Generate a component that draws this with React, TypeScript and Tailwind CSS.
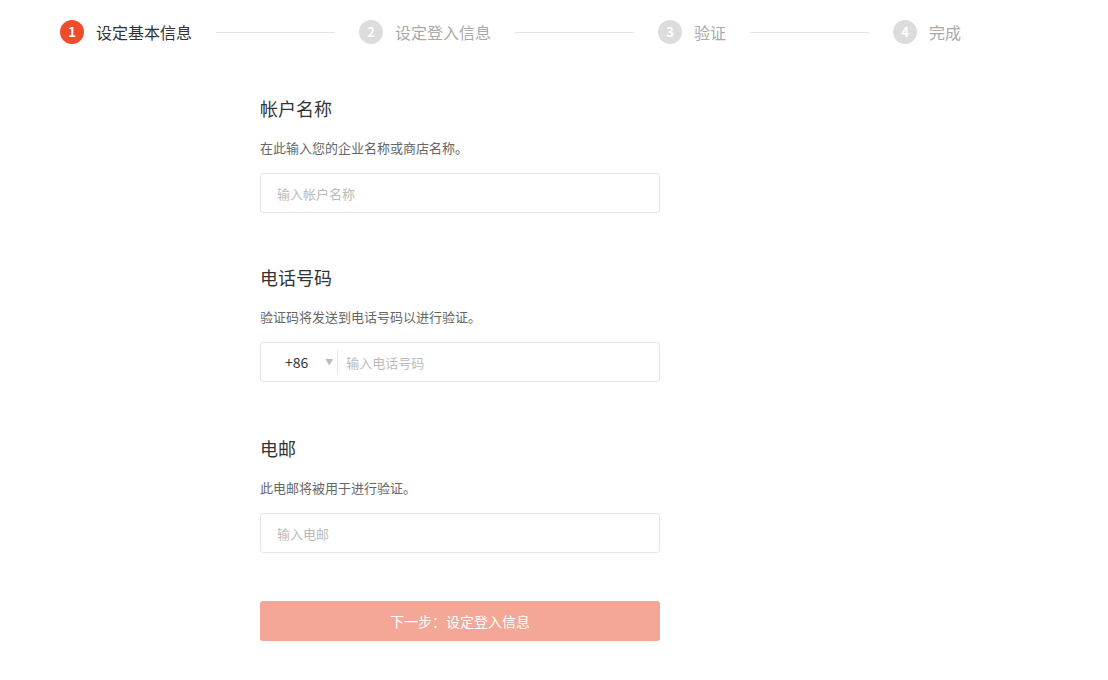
import { ChevronDown } from "lucide-react"

const font = { fontFamily: '"Noto Sans CJK SC", "Liberation Sans", sans-serif' }

const steps = ["设定基本信息", "设定登入信息", "验证", "完成"]

function Steps() {
  return (
    <div className="flex items-center pl-[60px] pt-5">
      {steps.map((s, i) => (
        <div key={s} className="flex items-center">
          <div
            className={
              i === 0
                ? "flex h-6 w-6 items-center justify-center rounded-full bg-[#ee4d2d] text-[13px] font-bold text-white"
                : "flex h-6 w-6 items-center justify-center rounded-full bg-[#dcdcdc] text-[13px] font-bold text-white"
            }
          >
            {i + 1}
          </div>
          <span className={i === 0 ? "ml-3 text-[16px] leading-6 text-[#333]" : "ml-3 text-[16px] leading-6 text-[#aaa]"}>
            {s}
          </span>
          {i < steps.length - 1 && <div className="mx-6 h-px w-[119px] bg-[#e3e3e3]" />}
        </div>
      ))}
    </div>
  )
}

function Section({ title, desc, children }: { title: string; desc: string; children: React.ReactNode }) {
  return (
    <section>
      <h2 className="text-[18px] leading-6 text-[#333]">{title}</h2>
      <p className="mt-[18px] text-[13px] leading-5 text-[#666]">{desc}</p>
      <div className="mt-[15px]">{children}</div>
    </section>
  )
}

export default function App() {
  return (
    <div className="min-h-[680px] bg-white" style={font}>
      <Steps />
      <div className="ml-[260px] w-[400px] pt-[52px]">
        <Section title="帐户名称" desc="在此输入您的企业名称或商店名称。">
          <input
            className="h-10 w-full rounded-[3px] border border-[#e5e5e5] px-4 text-[13px] text-[#333] outline-none placeholder:text-[#bbb]"
            placeholder="输入帐户名称"
          />
        </Section>
        <div className="mt-[52px]">
          <Section title="电话号码" desc="验证码将发送到电话号码以进行验证。">
            <div className="flex h-10 w-full items-center rounded-[3px] border border-[#e5e5e5]">
              <span className="ml-6 text-[14px] text-[#333]">+86</span>
              <span className="ml-[17px] text-[8px] text-[#bbb]">▼</span>
              <div className="ml-[4px] h-6 w-px bg-[#e5e5e5]" />
              <input
                className="h-full flex-1 bg-transparent px-2 text-[13px] text-[#333] outline-none placeholder:text-[#bbb]"
                placeholder="输入电话号码"
              />
            </div>
          </Section>
        </div>
        <div className="mt-[54px]">
          <Section title="电邮" desc="此电邮将被用于进行验证。">
            <input
              className="h-10 w-full rounded-[3px] border border-[#e5e5e5] px-4 text-[13px] text-[#333] outline-none placeholder:text-[#bbb]"
              placeholder="输入电邮"
            />
          </Section>
        </div>
        <button className="mt-12 flex h-10 w-full items-center justify-center rounded-[3px] bg-[#f5a797] text-[14px] text-white">
          下一步：设定登入信息
        </button>
      </div>
    </div>
  )
}
